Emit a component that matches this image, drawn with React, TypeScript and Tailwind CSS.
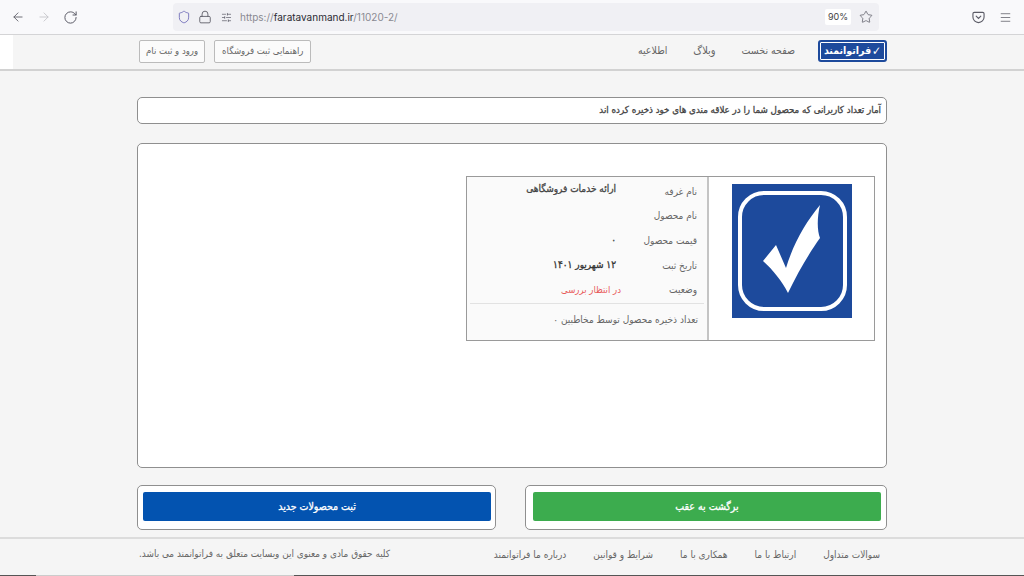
import { ArrowLeft, ArrowRight, Lock, Menu, RotateCw, Shield, SlidersHorizontal, Star } from 'lucide-react';

// DejaVu's real bold runs far too wide, so heavy text is regular + a thin stroke
const HEAVY = '[-webkit-text-stroke:0.3px]';

function Toolbar() {
  return (
    <div className="h-[35px] bg-[#f9f9fb] border-b border-[#d4d4d6] flex items-center font-['Inter',sans-serif]">
      <div className="w-[173px] pl-[11px] flex items-center gap-[12px] text-[#5b5b66]">
        <ArrowLeft size={14} strokeWidth={1.5} />
        <ArrowRight size={14} strokeWidth={1.5} className="text-[#c4c4c8]" />
        <RotateCw size={15} strokeWidth={1.6} />
      </div>
      <div className="w-[706px] h-[28px] bg-[#f0f0f4] rounded-[4px] flex items-center pl-[4px] pr-[4px]">
        <Shield size={14} strokeWidth={1.5} className="text-[#6f6bb8]" />
        <Lock size={14} strokeWidth={1.5} className="ml-[7px] text-[#5b5b66]" />
        <SlidersHorizontal size={11} strokeWidth={1.5} className="ml-[9px] text-[#5b5b66]" />
        <span className="ml-[8px] text-[10px] text-[#8a8a92]">
          https://<span className="text-[#2b2b33]">faratavanmand.ir</span>/11020-2/
        </span>
        <span className="ml-auto w-[26px] h-[16px] bg-white rounded-[2px] text-[9px] text-[#444] flex items-center justify-center">90%</span>
        <Star size={14} strokeWidth={1.3} className="ml-[8px] mr-[2px] text-[#5b5b66]" />
      </div>
      <div className="flex-1 flex items-center justify-end pr-[12px] gap-[14px] text-[#5b5b66]">
        <svg width="13" height="13" viewBox="0 0 14 14" fill="none" stroke="currentColor" strokeWidth="1.2">
          <path d="M2.5 1.5h9a1.5 1.5 0 0 1 1.5 1.5v3.5a6 6 0 0 1-12 0V3a1.5 1.5 0 0 1 1.5-1.5z" />
          <path d="M4.5 5.5L7 8l2.5-2.5" strokeLinecap="round" />
        </svg>
        <Menu size={13} strokeWidth={1.4} />
      </div>
    </div>
  );
}

function Logo() {
  return (
    <div className="w-[69px] h-[22px] rounded-[3px] bg-[#1d4a9c] border-2 border-[#1d4a9c] outline outline-1 -outline-offset-[3px] outline-white flex items-center justify-center gap-[1px] text-white text-[10.5px] font-bold">
      <span className="text-[12px]">✓</span>
      <span className="whitespace-nowrap">فراتوانمند</span>
    </div>
  );
}

function Nav() {
  return (
    <div className="relative h-[36px] border-b-2 border-[#d2d2d2] bg-[#f5f5f5]">
      <div className="absolute left-0 top-0 w-[13px] h-[34px] bg-white" />
      <div className="w-[750px] h-full mx-auto pl-[2px] flex items-center">
        <div className="flex-1 flex items-center text-[#666] -mt-[2px]" dir="rtl">
          <Logo />
          <span className="mr-[23px] text-[10.5px]">صفحه نخست</span>
          <span className="mr-[26px] text-[11px]">وبلاگ</span>
          <span className="mr-[26px] text-[10.5px]">اطلاعیه</span>
          <span className="mr-auto h-[23px] px-[7px] flex items-center bg-white/60 border border-[#bbb] rounded-[2px] whitespace-nowrap text-[9.5px]">راهنمایی ثبت فروشگاه</span>
          <span className="mr-[9px] h-[23px] px-[6px] flex items-center bg-white/60 border border-[#bbb] rounded-[2px] whitespace-nowrap text-[9.5px]">ورود و ثبت نام</span>
        </div>
      </div>
    </div>
  );
}

function Row({ label, children }: { label: string; children?: React.ReactNode }) {
  return (
    <div className="h-[24.6px] flex items-center text-[10px]">
      <span className="w-[91px] pr-[10px] text-[#666] whitespace-nowrap">{label}</span>
      {children}
    </div>
  );
}

function Card() {
  return (
    <div className="h-[325px] mt-[19px] bg-white border border-[#8f8f8f] rounded-[5px] pt-[32px] pl-[328px] pr-[11px]">
      <div className="h-[165px] flex border border-[#9a9a9a]" dir="rtl">
        <div className="w-[167px] shrink-0 border-l-2 border-[#c4c4c4] flex items-start justify-center pt-[7px] pl-[1px]">
          <svg width="120" height="134" viewBox="0 0 120 134">
            <rect width="120" height="134" fill="#1d4a9c" />
            <rect x="8" y="9" width="105" height="116" rx="24" fill="none" stroke="#fff" strokeWidth="4" />
            <path d="M31 77 L44 61 L54 84 C62 58 74 38 88 21 C85 34 85 46 88 54 C78 68 66 88 56 109 C50 97 41 86 31 77 Z" fill="#fff" />
          </svg>
        </div>
        <div className="flex-1 bg-[#fafafa] pt-[2px]">
          <Row label="نام غرفه">
            <span className={`-mt-[6px] text-[#444] ${HEAVY}`}>ارائه خدمات فروشگاهی</span>
          </Row>
          <Row label="نام محصول" />
          <Row label="قیمت محصول">
            <span className={`-mt-[2px] text-[#444] ${HEAVY}`}>۰</span>
          </Row>
          <Row label="تاریخ ثبت">
            <span className={`-mt-[2px] text-[#333] ${HEAVY}`}>۱۲ شهریور ۱۴۰۱</span>
          </Row>
          <Row label="وضعیت">
            <span className="text-[#e85a5a] text-[9.5px] -mr-[5px]">در انتظار بررسی</span>
          </Row>
          <div className="mt-[1px] h-[36px] mx-[3px] border-t border-[#e2e2e2] pr-[6px] pt-[8px] text-[10px] text-[#666]">
            تعداد ذخیره محصول توسط مخاطبین ۰
          </div>
        </div>
      </div>
    </div>
  );
}

function ActionButton({ label, color, box }: { label: string; color: string; box: string }) {
  return (
    <div className={`h-[45px] bg-white border border-[#8f8f8f] rounded-[5px] py-[6px] ${box}`}>
      <div className={`h-[29px] rounded-[2px] flex items-center justify-center text-white text-[10.5px] ${HEAVY} ${color}`}>
        {label}
      </div>
    </div>
  );
}

function Footer() {
  return (
    <div className="mt-[7px] h-[37px] border-t-2 border-[#dcdcdc] bg-[#f5f5f5]">
      <div className="w-[750px] h-full mx-auto flex items-center text-[10px] text-[#666] gap-[27px] pr-[7px] pl-[2px] -mt-[2px]" dir="rtl">
        <span>سوالات متداول</span>
        <span>ارتباط با ما</span>
        <span>همکاری با ما</span>
        <span>شرایط و قوانین</span>
        <span>درباره ما فراتوانمند</span>
        <span className="mr-auto text-[9.9px]">کلیه حقوق مادی و معنوی این وبسایت متعلق به فراتوانمند می باشد.</span>
      </div>
    </div>
  );
}

export default function App() {
  return (
    <div className="relative w-[1024px] h-[576px] overflow-hidden bg-[#f5f5f5] font-['DejaVu_Sans',sans-serif] [font-stretch:condensed]">
      <Toolbar />
      <Nav />
      <main className="w-[750px] ml-[137px] pt-[26px]">
        <div className={`h-[27px] bg-white border border-[#8f8f8f] rounded-[5px] px-[5px] flex items-center text-[9.7px] text-[#444] ${HEAVY}`} dir="rtl">
          آمار تعداد کاربرانی که محصول شما را در علاقه مندی های خود ذخیره کرده اند
        </div>
        <Card />
        <div className="mt-[17px] flex justify-between">
          <ActionButton label="ثبت محصولات جدید" color="bg-[#0353b0]" box="w-[359px] pl-[5px] pr-[4px]" />
          <ActionButton label="برگشت به عقب" color="bg-[#3cac4e]" box="w-[362px] pl-[7px] pr-[5px]" />
        </div>
      </main>
      <Footer />
      <div className="absolute left-0 bottom-0 w-full h-[1px] bg-[#555]" />
      <div className="absolute left-[36px] bottom-0 w-[258px] h-[1px] bg-[#ccc]" />
    </div>
  );
}
